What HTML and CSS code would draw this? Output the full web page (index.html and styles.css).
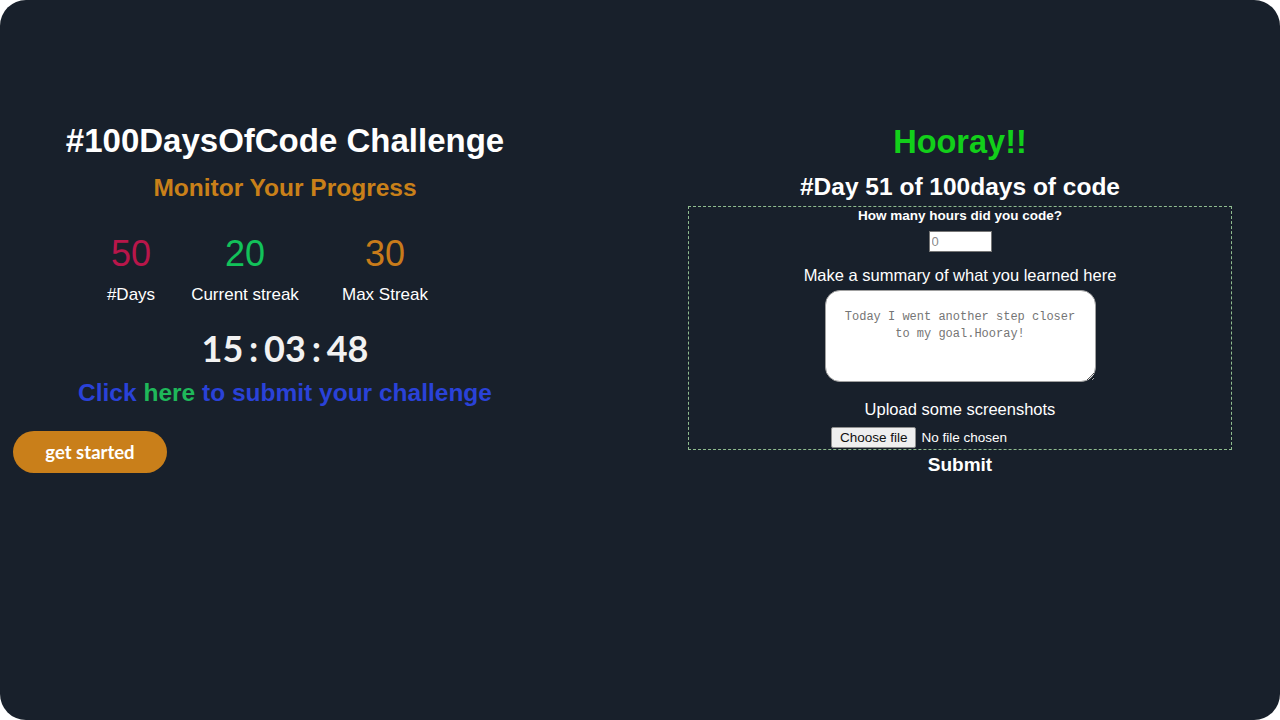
FILE: index.html
```html
<!DOCTYPE html>
<html lang="en">
<head>
<meta charset="utf-8">
<title>#100DaysOfCode Challenge</title>
<link rel="stylesheet" href="styles.css">
</head>
<body>
<div class="app">
  <section class="left">
    <h1 class="title">#100DaysOfCode Challenge</h1>
    <h2 class="subtitle">Monitor Your Progress</h2>
    <div class="stats">
      <div class="stat"><span class="num num-days">50</span><span class="label">#Days</span></div>
      <div class="stat"><span class="num num-streak">20</span><span class="label">Current streak</span></div>
      <div class="stat"><span class="num num-max">30</span><span class="label">Max Streak</span></div>
    </div>
    <div class="timer">15 : 03 : 48</div>
    <p class="cta">Click <a class="here" href="#">here</a> to submit your challenge</p>
    <button class="start" type="button">get started</button>
  </section>
  <section class="right">
    <h1 class="hooray">Hooray!!</h1>
    <h2 class="day">#Day 51 of 100days of code</h2>
    <form class="entry">
      <div class="box">
        <label class="question" for="hours">How many hours did you code?</label>
        <input class="hours" id="hours" type="text" placeholder="0">
        <label class="field-label" for="summary">Make a summary of what you learned here</label>
        <textarea class="summary" id="summary" placeholder="Today I went another step closer to my goal.Hooray!"></textarea>
        <label class="field-label upload">Upload some screenshots</label>
        <div class="file">
          <label class="file-btn">Choose file<input type="file" class="file-input"></label>
          <span class="no-file">No file chosen</span>
        </div>
      </div>
      <button class="submit" type="submit">Submit</button>
    </form>
  </section>
</div>
</body>
</html>
```
FILE: styles.css
```css
html, body {
  margin: 0;
  padding: 0;
  background: #ffffff;
}

.app {
  display: flex;
  width: 1280px;
  height: 720px;
  background: #18202b;
  border-radius: 26px;
  overflow: hidden;
  font-family: "Liberation Sans", Arial, sans-serif;
  color: #ffffff;
}

.left {
  width: 640px;
  box-sizing: border-box;
  padding: 121px 83px 0 13px;
  text-align: center;
}

.title {
  margin: 0;
  font-size: 33px;
  line-height: 40px;
  font-weight: 700;
}

.subtitle {
  margin: 12px 0 0;
  font-size: 24.5px;
  line-height: 30px;
  font-weight: 700;
  color: #c98019;
}

.stats {
  display: grid;
  grid-template-columns: 90px 138px 142px;
  margin: 30px 0 0 73px;
}

.stat {
  display: flex;
  flex-direction: column;
  align-items: center;
}

.num {
  font-size: 36px;
  line-height: 42px;
}

.num-days { color: #b8164a; }
.num-streak { color: #12c25a; }
.num-max { color: #c87b1a; }

.label {
  margin-top: 10px;
  font-size: 17px;
  line-height: 20px;
}

.timer {
  margin-top: 21px;
  font-family: Lato, "Liberation Sans", sans-serif;
  font-weight: 700;
  font-size: 36px;
  line-height: 44px;
  word-spacing: -3px;
  color: #f2f2f2;
}

.cta {
  margin: 8px 0 0;
  font-size: 24.5px;
  line-height: 30px;
  font-weight: 700;
  color: #2a42d8;
}

.here {
  color: #1fb85a;
  text-decoration: none;
}

.start {
  display: block;
  margin-top: 23px;
  width: 154px;
  height: 42px;
  border: none;
  border-radius: 21px;
  background: #c97f1a;
  color: #ffffff;
  font-family: Lato, "Liberation Sans", sans-serif;
  font-weight: 700;
  font-size: 18.5px;
  padding: 0;
}

.right {
  width: 640px;
  padding-top: 122px;
  text-align: center;
}

.hooray {
  margin: 0;
  font-size: 32.5px;
  line-height: 40px;
  font-weight: 700;
  color: #12cf1a;
}

.day {
  margin: 10px 0 0;
  font-size: 24.5px;
  line-height: 30px;
  font-weight: 700;
}

.entry {
  margin: 4px 0 0;
}

.box {
  width: 544px;
  margin: 0 auto;
  box-sizing: border-box;
  border: 1px dashed #8fbc8f;
  padding: 1px 0 1px;
}

.question {
  display: block;
  font-size: 13.5px;
  line-height: 16px;
  font-weight: 700;
}

.hours {
  display: block;
  margin: 7px auto 0;
  width: 63px;
  height: 21px;
  box-sizing: border-box;
  border: 1px solid #767676;
  padding: 0 2px;
  background: #ffffff;
  font-family: "Liberation Sans", Arial, sans-serif;
  font-size: 13px;
}

.hours::placeholder {
  color: #8a8a8a;
}

.field-label {
  display: block;
  margin-top: 14px;
  font-size: 16.5px;
  line-height: 19px;
}

.summary {
  display: block;
  margin: 5px auto 0;
  width: 271px;
  height: 92px;
  box-sizing: border-box;
  padding: 18px 12px;
  border: 1px solid #a0a0a0;
  border-radius: 15px;
  background: #ffffff;
  font-family: "Liberation Mono", "DejaVu Sans Mono", monospace;
  font-size: 12px;
  line-height: 17px;
  text-align: center;
}

.summary::placeholder {
  color: #757575;
}

.upload {
  margin-top: 18px;
}

.file {
  display: flex;
  justify-content: center;
  align-items: center;
  gap: 5px;
  margin-top: 8px;
  padding-right: 82px;
  height: 21px;
}

.file-btn {
  display: flex;
  align-items: center;
  height: 21px;
  box-sizing: border-box;
  padding: 0 8px;
  border: 1px solid #8f8f8f;
  border-radius: 2px;
  background: #efefef;
  color: #111111;
  font-size: 13.5px;
}

.file-input {
  display: none;
}

.no-file {
  font-size: 13.5px;
  color: #ffffff;
}

.submit {
  display: block;
  margin: 3px auto 0;
  padding: 0;
  border: none;
  background: transparent;
  color: #ffffff;
  font-family: "Liberation Sans", Arial, sans-serif;
  font-weight: 700;
  font-size: 19px;
  line-height: 24px;
}
```
